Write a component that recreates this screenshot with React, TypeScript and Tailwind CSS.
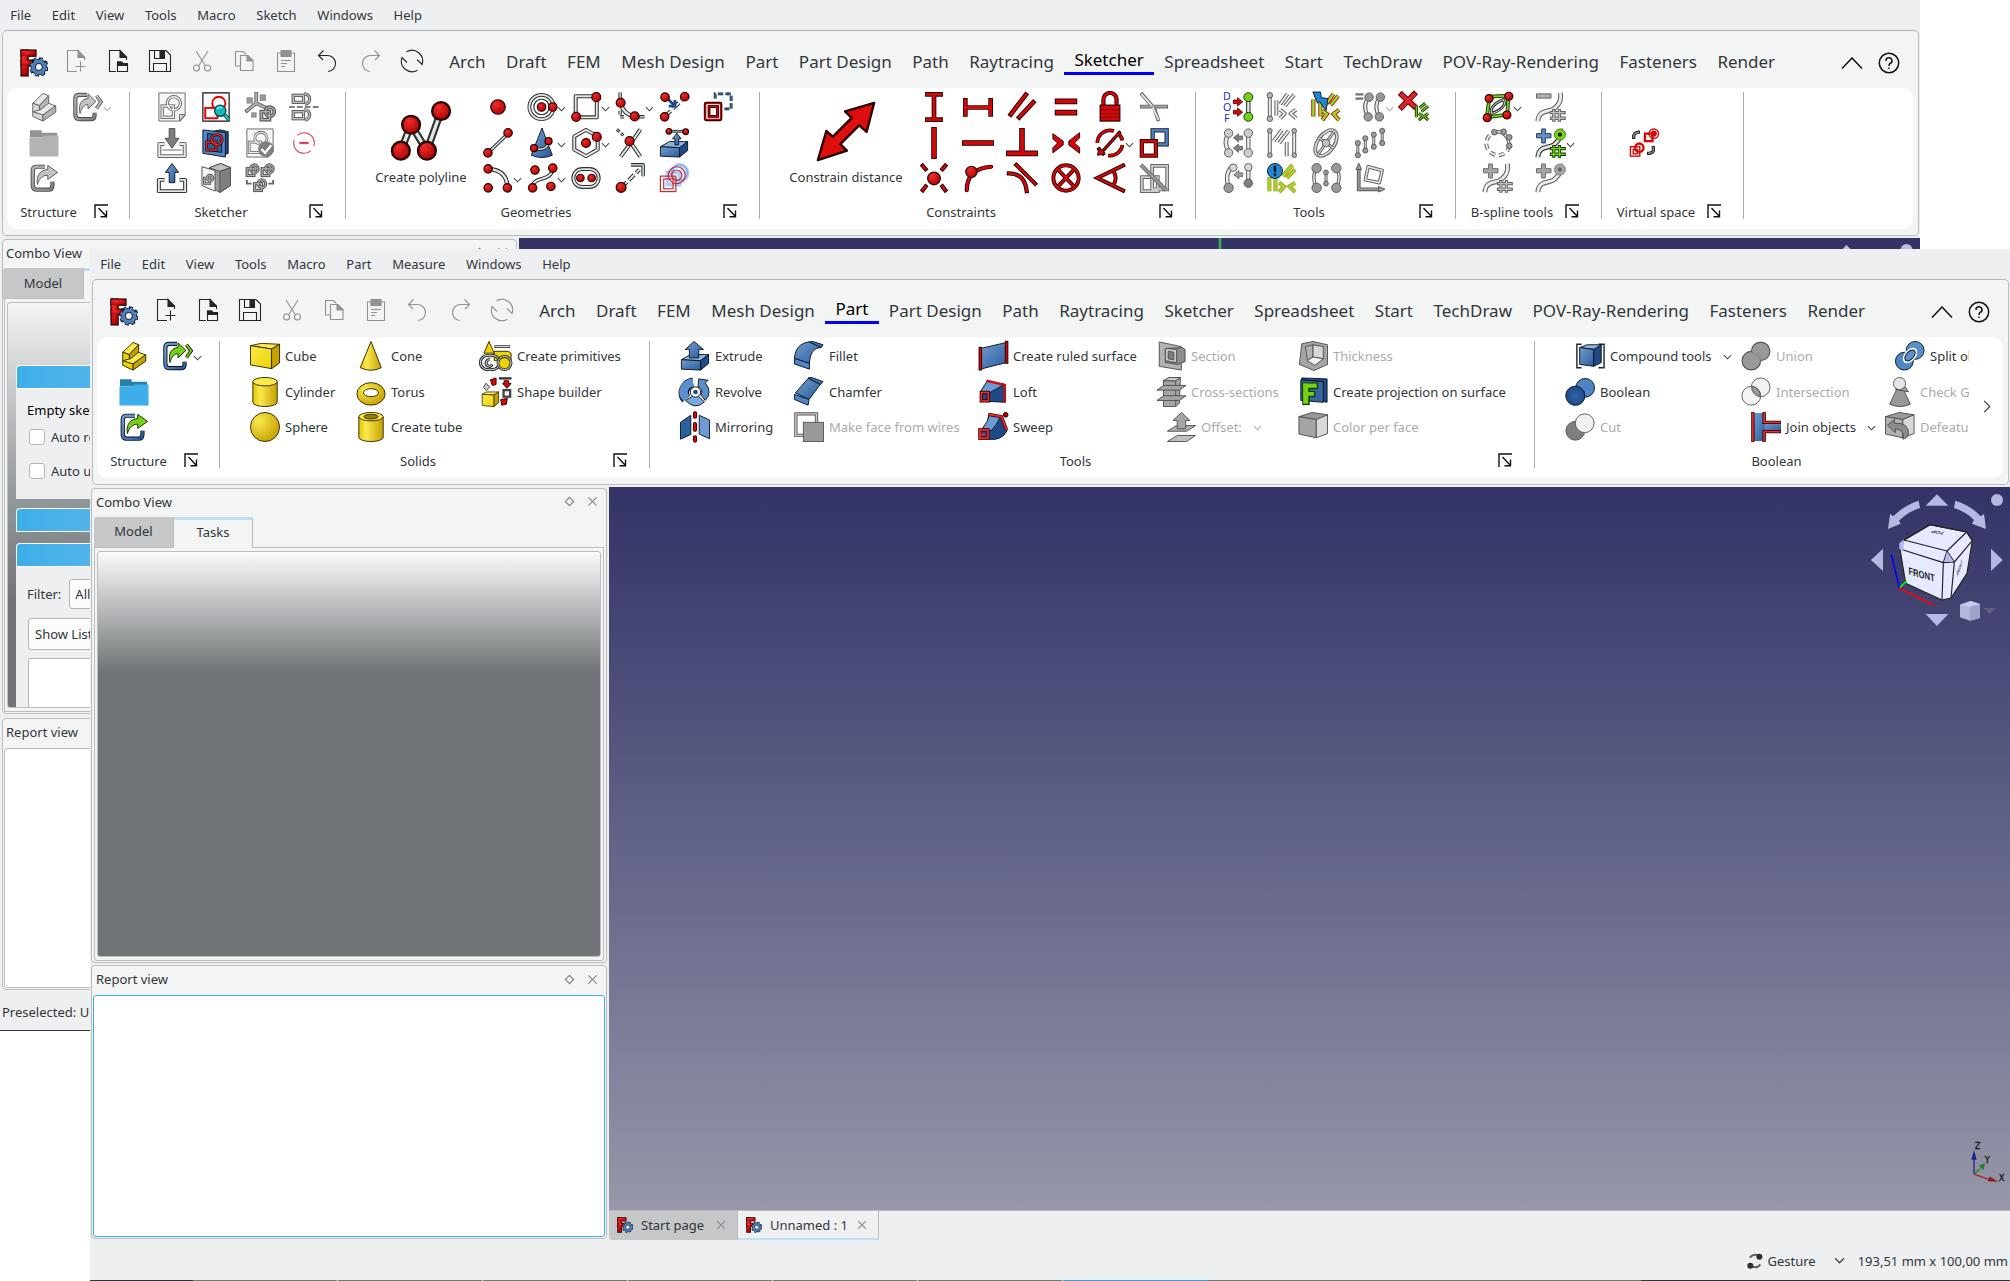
import React from "react";

type Node = React.ReactNode;

/* ---------- drawing helpers (64 x 64 canvas) ---------- */
const Dot = ({ x, y, r = 8 }: { x: number; y: number; r?: number }) => (
  <circle cx={x} cy={y} r={r} fill="url(#gR)" stroke="#280000" strokeWidth={2.5} />
);
const Tube = ({ d, w = 4, dash }: { d: string; w?: number; dash?: string }) => (
  <g fill="none" strokeLinejoin="round">
    <path d={d} stroke="#2e3436" strokeWidth={w + 4.5} strokeDasharray={dash} />
    <path d={d} stroke="#e4e7e2" strokeWidth={w} strokeDasharray={dash} />
  </g>
);
const Line = ({ d, w = 6, c = "#d40808", o = "#280000", cap = "square" }: { d: string; w?: number; c?: string; o?: string; cap?: "square" | "butt" | "round" }) => (
  <g fill="none" strokeLinecap={cap} strokeLinejoin="miter">
    <path d={d} stroke={o} strokeWidth={w + 4} />
    <path d={d} stroke={c} strokeWidth={w} />
  </g>
);
const Shape = ({ d, f = "url(#gB)", s = "#0b1521", w = 2 }: { d: string; f?: string; s?: string; w?: number }) => (
  <path d={d} fill={f} stroke={s} strokeWidth={w} strokeLinejoin="round" />
);
const Green = ({ d, w = 5, o = "#c01800" }: { d: string; w?: number; o?: string }) => <Line d={d} w={w} c="#8ae234" o={o} cap="butt" />;
const GDot = ({ x, y, r = 8, f = "#8ae234" }: { x: number; y: number; r?: number; f?: string }) => (
  <circle cx={x} cy={y} r={r} fill={f} stroke="#172a1a" strokeWidth={2} />
);

const Gear = ({ x, y, r }: { x: number; y: number; r: number }) => (
  <g fill="none">
    <circle cx={x} cy={y} r={r} stroke="#0b1521" strokeWidth={r * 0.62} strokeDasharray={`${r * 0.46} ${r * 0.3254}`} />
    <circle cx={x} cy={y} r={r * 0.75} stroke="#0b1521" strokeWidth={r * 0.72} />
    <circle cx={x} cy={y} r={r * 0.98} stroke="#5b8bc6" strokeWidth={r * 0.4} strokeDasharray={`${r * 0.28} ${r * 0.5054}`} strokeDashoffset={-r * 0.09} />
    <circle cx={x} cy={y} r={r * 0.75} stroke="#4f80bd" strokeWidth={r * 0.5} />
  </g>
);

const SketchPaper = (
  <>
    <path d="M4 2H60V50L50 62H4Z" fill="#f4f5f3" stroke="#2e3436" strokeWidth={2} />
    <path d="M60 48H48V62Z" fill="#c8cbc7" stroke="#2e3436" strokeWidth={2} />
  </>
);
const MiniSketch = ({ x, y, s = 1 }: { x: number; y: number; s?: number }) => (
  <g transform={`translate(${x} ${y}) scale(${s})`} fill="none">
    <g stroke="#1a1c1d" strokeWidth={8}><rect x="3" y="12" width="17" height="17" /><circle cx="21" cy="12" r="9.5" /></g>
    <g stroke="#999" strokeWidth={3}><rect x="3" y="12" width="17" height="17" /><circle cx="21" cy="12" r="9.5" /></g>
  </g>
);
/* flat block seen from above, as used by the extrusion family */
const Slab = () => (
  <>
    <Shape d="M3 40L22 29H61L44 42Z" f="#8fb6e0" />
    <Shape d="M3 40L44 42V62L3 60Z" />
    <Shape d="M44 42L61 29V48L44 62Z" f="#204a87" />
  </>
);
const PlusS = ({ c }: { c: string }) => <Shape d="M12 2H20V12H32V21H20V32H12V21H1V12H12Z" f={c} s="#2e3436" />;
const Curve = <Tube d="M4 62C6 34 32 46 42 32C52 24 54 14 52 2" w={6} />;
const Hash = ({ c = "#73d216" }: { c?: string }) => <Line d="M38 40V60M50 40V60M33 44H60M33 56H60" w={3} c={c} o="#173a00" />;

const ICONS: Record<string, Node> = {
  logo: (
    <>
      <g fill="#1f0000"><rect x="1" y="1" width="19" height="62" /><rect x="1" y="1" width="37" height="17" /><rect x="1" y="24" width="29" height="15" /></g>
      <g fill="url(#gR)"><rect x="3.5" y="3.5" width="14" height="57" /><rect x="3.5" y="3.5" width="32" height="12" /><rect x="3.5" y="27" width="24" height="10" /></g>
      <Gear x={43} y={41} r={17} />
      <circle cx={43} cy={41} r={8} fill="#f3f5f4" stroke="#0b1521" strokeWidth={2} />
    </>
  ),
  brick: (
    <g stroke="#302b00" strokeWidth={2} strokeLinejoin="round">
      <path d="M8 24L30 3L42 8L22 29Z" fill="#fce94f" />
      <path d="M22 29L42 8V28L24 44Z" fill="#c4a000" />
      <path d="M8 24L22 29V46L8 42Z" fill="#edd400" />
      <path d="M8 42L28 50L57 30L42 24L24 38Z" fill="#fce94f" />
      <path d="M8 42V52L30 62V49Z" fill="#edd400" />
      <path d="M30 49L57 29V43L30 62Z" fill="#c4a000" />
    </g>
  ),
  link: (
    <>
      <path d="M34 8H16Q8 8 8 16V48Q8 57 17 57H42Q50 57 50 48V40" fill="none" stroke="#0b1521" strokeWidth={9} />
      <path d="M34 8H16Q8 8 8 16V48Q8 57 17 57H42Q50 57 50 48V40" fill="none" stroke="url(#gB)" strokeWidth={5} />
      <Shape d="M18 46C14 26 26 14 40 14V5L61 20L40 35V26C30 26 22 32 18 46Z" f="#73d216" s="#172a04" />
    </>
  ),
  links: (
    <>
      <path d="M30 6H13Q5 6 5 14V48Q5 58 14 58H38Q46 58 46 50V44" fill="none" stroke="#0b1521" strokeWidth={9} />
      <path d="M30 6H13Q5 6 5 14V48Q5 58 14 58H38Q46 58 46 50V44" fill="none" stroke="url(#gB)" strokeWidth={5} />
      <Shape d="M15 46C10 26 20 14 32 14V4L49 20L32 36V27C24 27 18 34 15 46Z" f="#73d216" s="#172a04" />
      <Line d="M50 8L60 21L50 35" w={3.5} c="#73d216" o="#172a04" cap="butt" />
    </>
  ),
  folder: (
    <>
      <path d="M2 5H27V10H60V20H2Z" fill="#2980a8" />
      <path d="M1 21H26L32 16H63V61H1Z" fill="#3daee9" />
    </>
  ),
  /* sketcher */
  newSketch: (
    <>
      {SketchPaper}
      <g fill="none" stroke="#2e3436" strokeWidth={7}><rect x="11" y="30" width="24" height="24" /><circle cx="36" cy="24" r="14" /></g>
      <g fill="none" stroke="#eee" strokeWidth={3}><rect x="11" y="30" width="24" height="24" /><circle cx="36" cy="24" r="14" /></g>
    </>
  ),
  editSketch: (
    <>
      <path d="M4 2H60V62H4Z" fill="#fafafa" stroke="#111" strokeWidth={2.5} />
      <g fill="none" stroke="#ef0000" strokeWidth={4}><rect x="9" y="34" width="26" height="22" /><circle cx="38" cy="24" r="14" /></g>
      <path d="M48 46L60 59" stroke="#0b4c4c" strokeWidth={8} />
      <path d="M48 46L60 59" stroke="#16d0d2" strokeWidth={4} />
      <circle cx="41" cy="40" r="12" fill="#19b5b8" stroke="#064a4c" strokeWidth={3} />
      <path d="M34 36Q38 31 45 34" stroke="#5df0f0" strokeWidth={4} fill="none" />
    </>
  ),
  reorient: (
    <>
      <Line d="M24 4V24L4 40M24 24L46 34" w={4} c="#999" o="#333" />
      <path d="M32 6H44V18H32ZM4 12H16V24H4ZM14 44H24V54H14Z" fill="#777" stroke="#333" />
      <MiniSketch x={32} y={30} s={1} />
    </>
  ),
  validate: (
    <>
      {SketchPaper}
      <g fill="none" stroke="#2e3436" strokeWidth={6}><rect x="9" y="30" width="24" height="22" /><circle cx="34" cy="22" r="13" /></g>
      <g fill="none" stroke="#eee" strokeWidth={2.5}><rect x="9" y="30" width="24" height="22" /><circle cx="34" cy="22" r="13" /></g>
      <circle cx="45" cy="45" r="17" fill="#555" />
      <path d="M35 45L43 53L56 37" stroke="#fff" strokeWidth={5} fill="none" />
    </>
  ),
  leave: (
    <>
      <Tube d="M16 34H5V60H59V34H48" w={4} />
      <path d="M12 47H52" stroke="#2e3436" strokeWidth={2} />
      <Shape d="M26 1H38V22H47L32 43L17 22H26Z" f="#555" />
    </>
  ),
  exit: (
    <>
      <Tube d="M16 36H4V60H60V36H48" w={4} />
      <Shape d="M32 1L46 20H38V42H26V20H18Z" />
    </>
  ),
  mapView: (
    <>
      <Shape d="M20 8L42 4L58 8V54L48 58L20 50Z" f="#204a87" />
      <Shape d="M4 4L52 10V62L4 54Z" f="#4f86c6" />
      <Shape d="M14 12L44 15V52L14 48Z" f="#2d5f9f" />
      <g fill="none" stroke="#280000" strokeWidth={6}><rect x="12" y="30" width="20" height="17" /><circle cx="34" cy="25" r="11" /></g>
      <g fill="none" stroke="#ef2929" strokeWidth={3}><rect x="12" y="30" width="20" height="17" /><circle cx="34" cy="25" r="11" /></g>
    </>
  ),
  mapSketch: (
    <>
      <Shape d="M18 10L42 1L63 10V48L40 63L18 50Z" f="#777" />
      <Shape d="M18 10L40 18L63 10L42 1Z" f="#aaa" />
      <Shape d="M40 18L63 10V48L40 63Z" f="#555" />
      <Shape d="M2 8L30 16V60L2 48Z" f="#f0f0f0" />
      <MiniSketch x={5} y={24} s={0.68} />
    </>
  ),
  merge: (<><MiniSketch x={2} y={2} s={0.85} /><MiniSketch x={34} y={2} s={0.85} /><MiniSketch x={18} y={34} s={0.85} /><path d="M4 36V44H14M60 36V44H50" stroke="#333" strokeWidth={4} fill="none" /></>),
  mirrorSketch: (
    <>
      <path d="M0 32H64" stroke="#555" strokeWidth={4} strokeDasharray="12 5" />
      <g fill="none" stroke="#222" strokeWidth={7}><rect x="9" y="7" width="22" height="15" /><path d="M32 4A11 11 0 1 1 34 26" /><rect x="9" y="42" width="22" height="15" /><path d="M32 38A11 11 0 1 1 34 60" /></g>
      <g fill="none" stroke="#aaa" strokeWidth={3}><rect x="9" y="7" width="22" height="15" /><path d="M32 4A11 11 0 1 1 34 26" /><rect x="9" y="42" width="22" height="15" /><path d="M32 38A11 11 0 1 1 34 60" /></g>
    </>
  ),
  stop: (<g fill="none" stroke="#da4453"><circle cx="32" cy="32" r="22" strokeWidth={2.2} strokeDasharray="58 11" strokeDashoffset={-18} /><path d="M22 32H42" strokeWidth={5} /></g>),
  /* geometries */
  polyline: (<><Tube d="M10.5 53L21.4 25.3L38.3 53L53.4 10.7" w={3.5} /><Dot x={53.4} y={10.7} r={9.5} /><Dot x={21.4} y={25.3} r={9.5} /><Dot x={10.5} y={53} r={9.5} /><Dot x={38.3} y={53} r={9.5} /></>),
  point: <Dot x={32} y={32} r={15.5} />,
  circle: (<><g fill="none"><circle cx="31" cy="32" r="26" stroke="#2e3436" strokeWidth={8} /><circle cx="31" cy="32" r="26" stroke="#e4e7e2" strokeWidth={4} /><circle cx="31" cy="32" r="16.5" stroke="#2e3436" strokeWidth={2.5} /></g><Dot x={31} y={32} r={9} /><Dot x={55} y={32} r={9} /></>),
  rect: (<><Tube d="M10 9H55V54H10Z" w={4} /><Dot x={54} y={11} r={9.5} /><Dot x={11} y={53} r={9.5} /></>),
  fillet: (<><Tube d="M11 1V14M48 53H63" w={3} /><Tube d="M11 40V53H22" w={3} dash="8 5" /><Tube d="M12 24Q18 48 42 52" w={5} /><Dot x={12} y={23} r={9.5} /><Dot x={42} y={52} r={9.5} /></>),
  split: (<><Tube d="M12 53L56 10" w={4} dash="18 7" /><path d="M20 16L34 30M34 17V30H21" stroke="#204a87" strokeWidth={6} fill="none" /><Dot x={13} y={11} r={9} /><Dot x={12} y={53} r={9} /><Dot x={55} y={10} r={9} /></>),
  external6: (<><path d="M26 14V4H60V36H46" fill="none" stroke="#0b1521" strokeWidth={6} strokeDasharray="11 5" /><path d="M26 14V4H60V36H46" fill="none" stroke="#3f78b8" strokeWidth={3} strokeDasharray="11 5" /><rect x="3" y="22" width="37" height="39" rx="4" fill="#cc0000" stroke="#280000" strokeWidth={2.5} /><rect x="7" y="26" width="29" height="31" fill="#f2f2f2" /><rect x="13" y="31" width="18" height="21" fill="#fff" stroke="#280000" strokeWidth={6} /><rect x="13" y="31" width="18" height="21" fill="none" stroke="#cc0000" strokeWidth={2.5} /></>),
  line: (<><Tube d="M11 53L54 11" w={3} /><Dot x={10.5} y={53} r={9} /><Dot x={53.5} y={10.5} r={9} /></>),
  conic: (<><Shape d="M32 0L54 58Q32 68 9 58Z" /><Tube d="M16 44Q44 50 46 28" w={3} /><Dot x={46} y={28} r={7.5} /><Dot x={15} y={43} r={7.5} /></>),
  polygon: (<><Tube d="M32 4L57 18V46L32 60L7 46V18Z" w={4} /><Dot x={32} y={32} r={9.5} /><Dot x={55} y={19} r={9.5} /></>),
  trim: (<><Tube d="M54 3Q40 24 12 61M26 20L54 61" w={4} /><Tube d="M4 3L18 16" w={2} dash="8 4" /><Dot x={31} y={28} r={9.5} /></>),
  extern: (<><Slab /><Tube d="M20 7H58" w={1.5} /><Shape d="M38 11L47 23H42V36H34V23H29Z" /><Dot x={21} y={7} r={6} /><Dot x={57} y={8} r={6} /></>),
  arc: (<><Tube d="M14 13Q50 16 52 50" w={5} /><Dot x={11} y={12.5} r={9} /><Dot x={11} y={53} r={9} /><Dot x={52} y={53} r={9} /></>),
  bspline: (<><Tube d="M12 53C14 24 48 44 56 12" w={4} /><Dot x={17} y={15} r={9} /><Dot x={55} y={11} r={9} /><Dot x={12} y={53} r={9} /><Dot x={51} y={50} r={9} /></>),
  slot: (<><Tube d="M24 13H40A19 19 0 0 1 40 51H24A19 19 0 0 1 24 13Z" w={4} /><Dot x={20} y={32} r={8} /><Dot x={44} y={32} r={8} /></>),
  extend: (<><Tube d="M14 52L52 14" w={4} dash="16 6" /><Tube d="M34 4H60V28" w={3} /><Dot x={13} y={52} r={10.5} /></>),
  carbon: (<><g fill="none" stroke="#a9ccff" strokeWidth={8}><rect x="18" y="20" width="26" height="26" /><circle cx="44" cy="21" r="17" /></g><g fill="none" stroke="#6f8fe0" strokeWidth={1.5}><circle cx="44" cy="21" r="17" /></g><g fill="none" stroke="#c9262a" strokeWidth={2.5}><rect x="3" y="28" width="33" height="33" /><rect x="10" y="34" width="20" height="21" /><circle cx="38" cy="26" r="18" /><circle cx="38" cy="26" r="11" /></g></>),
  /* constraints */
  distance: <Shape d="M62 2L54 33L46 26L26 46L33 53L2 63L11 32L18 38L38 18L31 11Z" f="url(#gRed)" s="#280000" w={2.5} />,
  cV: <Line d="M18 5H46M32 5V59M18 59H46" />,
  cH: <Line d="M5 18V48M5 33H59M59 18V48" />,
  cPar: <Line d="M8 48L40 6M26 54L56 22" />,
  cEq: <Line d="M14 20H50M14 44H50" w={8} />,
  lock: (<><Line d="M18 28V16A14 14 0 0 1 46 16V28" w={5} cap="butt" /><rect x="11" y="28" width="42" height="34" fill="#d40808" stroke="#280000" strokeWidth={2.5} /><path d="M13 38H51M13 46H51M13 54H51" stroke="#7c0000" strokeWidth={2} /></>),
  toggleC: (<g fill="none"><path d="M4 2L28 30M32 34L42 62M2 31H62" stroke="#2e3436" strokeWidth={8} /><path d="M5 4L28 30L42 60" stroke="#ddd" strokeWidth={4} /><path d="M4 31H60" stroke="#888" strokeWidth={4} /></g>),
  cVl: <Line d="M32 4V60" w={8} />,
  cHl: <Line d="M4 32H60" w={8} />,
  cPerp: <Line d="M32 6V52M4 54H60" w={8} />,
  cSym: (<><Shape d="M4 12L26 28V36L4 53V42L14 32L4 23Z" f="#d40808" s="#280000" /><Shape d="M61 10L38 28V36L61 54V42L50 32L61 21Z" f="#d40808" s="#280000" /></>),
  cDia: (<><path d="M32 5A27 27 0 1 0 32 59A27 27 0 1 0 32 5" fill="none" stroke="#280000" strokeWidth={8} strokeDasharray="42 10 20 8" /><path d="M32 5A27 27 0 1 0 32 59A27 27 0 1 0 32 5" fill="none" stroke="#d40808" strokeWidth={4.5} strokeDasharray="42 10 20 8" /><Line d="M14 52L52 10" w={3} /><Shape d="M5 58L9 42L22 56Z" f="#d40808" s="#280000" /></>),
  swap: (<><rect x="29" y="5" width="30" height="30" fill="#fff" stroke="#0b1521" strokeWidth={9} /><rect x="29" y="5" width="30" height="30" fill="none" stroke="#4f86c6" strokeWidth={5} /><rect x="6" y="28" width="30" height="31" fill="#fff" stroke="#280000" strokeWidth={9} /><rect x="6" y="28" width="30" height="31" fill="none" stroke="#d40808" strokeWidth={5} /></>),
  cFix: (<><Line d="M8 6L14 13M56 6L50 13M8 58L14 50M56 58L50 50" w={5} /><Dot x={32} y={33} r={13.5} /></>),
  cTan: (<><Line d="M8 58Q8 12 60 8" w={5} cap="round" /><Dot x={18} y={19} r={12} /></>),
  cTangent: (<><Line d="M20 4L60 44" w={5} /><Line d="M4 22Q38 22 42 60" w={5} /></>),
  cBlock: (<><Line d="M32 5A27 27 0 1 0 32 59A27 27 0 1 0 32 5M14 13L50 51M50 13L14 51" w={4.5} cap="butt" /></>),
  cAngle: <Line d="M60 5L5 32L60 59M40 18Q48 32 40 46" w={4.5} />,
  toggleAct: (<g fill="none"><path d="M6 30H40V60H6ZM28 6H60V56H28Z" stroke="#2e3436" strokeWidth={8} /><path d="M6 30H40V60H6ZM28 6H60V56H28Z" stroke="#bbb" strokeWidth={4} /><path d="M4 4L58 58" stroke="#2e3436" strokeWidth={9} /><path d="M4 4L58 58" stroke="#777" strokeWidth={5} /></g>),
  /* tools */
  dof: (
    <>
      <g fontFamily="Noto Sans, sans-serif" fontSize="23" fill="#1a2fbf"><text x="0" y="18">D</text><text x="0" y="40.500">O</text><text x="2" y="63">F</text></g>
      <Tube d="M54 12V52" w={5} /><GDot x={54} y={11} r={9.5} f="#73d216" /><GDot x={54} y={53} r={9.5} f="#73d216" />
      <Shape d="M22 17H31V12L42 21L31 30V25H22ZM22 39H31V34L42 43L31 52V47H22Z" f="#d40808" s="#280000" w={1.5} />
    </>
  ),
  t2: (<><Tube d="M6 6V58M20 18V50" w={4} /><GDot x={6} y={7} r={6} f="#999" /><GDot x={6} y={57} r={6} f="#999" /><Tube d="M28 26L44 4M38 30L58 6" w={4} /><Tube d="M28 38L38 46L28 56M62 38L50 46L62 56" w={4} /></>),
  t3: (<><Green d="M5 16V52M20 22V52M32 26L48 4M42 28L58 8M24 40L34 47L24 60M60 38L48 47L60 60" /><Shape d="M4 0H20L22 12L36 14L32 40L18 20L14 24Z" f="#1e88d2" s="#0b1521" /></>),
  t4: (<><path d="M1 5H18M1 14H18" stroke="#444" strokeWidth={5} /><Tube d="M30 10Q14 30 28 52M54 10Q38 30 52 52" w={4} /><GDot x={30} y={11} r={9} f="#777" /><GDot x={54} y={11} r={9} f="#777" /><GDot x={28} y={53} r={9} f="#777" /><GDot x={52} y={53} r={9} f="#777" /></>),
  t5: (<><Line d="M6 6L32 30M32 5L6 32" w={8} c="#d8262a" o="#5a0000" /><Line d="M37 30V54M44 34L56 24M48 42L62 30M42 46L52 52L42 60M62 46L54 52L62 60" w={2.5} c="#73d216" o="#173a00" cap="butt" /></>),
  t6: (<><Tube d="M14 10Q-2 30 14 52M54 12V52" w={5} /><GDot x={12} y={11} r={9} f="#bbb" /><GDot x={54} y={11} r={9} f="#bbb" /><GDot x={12} y={53} r={9} f="#bbb" /><GDot x={54} y={53} r={9} f="#bbb" /><Shape d="M42 17H33V12L22 21L33 30V25H42ZM42 39H33V34L22 43L33 52V47H42Z" f="#555" s="#222" w={1.5} /></>),
  t7: (<><Tube d="M6 6V58M58 6V58M42 30V60M14 28L32 4M26 32L46 6" w={4} /><GDot x={6} y={6} r={5} f="#999" /><GDot x={6} y={58} r={5} f="#999" /><GDot x={58} y={6} r={5} f="#999" /><GDot x={58} y={58} r={5} f="#999" /></>),
  t8: (<g transform="rotate(35 32 32)"><ellipse cx="32" cy="32" rx="18" ry="31" fill="none" stroke="#2e3436" strokeWidth={8} /><ellipse cx="32" cy="32" rx="18" ry="31" fill="none" stroke="#ccc" strokeWidth={3.5} /><Tube d="M32 2V62M14 32H50" w={2} /><GDot x={32} y={32} r={8} f="#aaa" /></g>),
  t9: (<><Tube d="M6 30V56M22 22V48M40 14V42M58 6V34" w={2} /><g>{[[6, 32], [6, 58], [22, 22], [22, 48], [40, 14], [40, 40], [58, 6], [58, 32]].map(([x, y]) => <GDot key={`${x}-${y}`} x={x} y={y} r={5.5} f="#777" />)}</g></>),
  t10: (<><Tube d="M22 6Q2 20 12 52M54 12V46" w={5} /><GDot x={22} y={10} r={8} f="#ccc" /><GDot x={54} y={9} r={8} f="#ccc" /><GDot x={12} y={53} r={10} f="#777" /><GDot x={54} y={43} r={9} f="#555" /><Shape d="M42 21H34V16L23 25L34 34V29H42Z" f="#777" s="#222" w={1.5} /></>),
  t11: (<><Green o="#d88a1a" d="M5 30V60M18 34V60M34 28L54 4M42 32L60 14M26 42L36 50L26 62M60 42L48 50L60 62" /><circle cx="17" cy="17" r="16" fill="#1e88d2" stroke="#0b1521" strokeWidth={2} /><path d="M17 6V19M17 22V27" stroke="#111" strokeWidth={5} /></>),
  t12: (<><Tube d="M12 10Q0 30 12 54M54 10Q66 30 54 54" w={3} /><Tube d="M32 22V46" w={2} /><GDot x={12} y={11} r={10} f="#777" /><GDot x={54} y={11} r={10} f="#777" /><GDot x={12} y={53} r={10} f="#777" /><GDot x={54} y={53} r={10} f="#777" /><GDot x={32} y={20} r={5} f="#777" /><GDot x={32} y={44} r={5} f="#777" /></>),
  t13: (<><Line d="M8 12V56H52" w={4} c="#777" o="#222" /><Shape d="M8 0L14 14H2ZM64 56L50 62V50Z" f="#777" s="#222" /><Tube d="M28 8L58 16L52 42L22 36Z" w={3} /></>),
  b1: (<><path d="M14 10L54 8L52 48L8 54Z" fill="#fff" stroke="#173a00" strokeWidth={8} /><path d="M14 10L54 8L52 48L8 54Z" fill="none" stroke="#73d216" strokeWidth={4} /><Tube d="M18 46C14 30 30 22 44 16L46 26C40 38 30 42 18 46Z" w={2} /><Dot x={13} y={14} r={8.5} /><Dot x={55} y={9} r={8.5} /><Dot x={51} y={49} r={8.5} /><Dot x={9} y={55} r={8.5} /></>),
  b2: (<><Tube d="M32 8A25 25 0 1 0 57 34" w={4} dash="12 8" /><Tube d="M28 8Q52 6 57 40" w={3} /><GDot x={24} y={9} r={6} f="#777" /><GDot x={44} y={8} r={6} f="#777" /><GDot x={56} y={20} r={6} f="#777" /><GDot x={56} y={38} r={6} f="#777" /></>),
  b3: (<>{Curve}<PlusS c="#888" /><Hash c="#aaa" /></>),
  b4: (<>{Curve}<Shape d="M1 4H32V13H1Z" f="#999" s="#222" /><Hash c="#aaa" /></>),
  b5: (<>{Curve}<PlusS c="#5b8fce" /><Hash /><circle cx="51" cy="14" r="12" fill="#73d216" stroke="#2e6b00" strokeWidth={1.5} /><circle cx="51" cy="14" r="4.500" fill="#222" /></>),
  b6: (<>{Curve}<PlusS c="#888" /><circle cx="51" cy="14" r="12" fill="#888" stroke="#444" strokeWidth={1.5} /><circle cx="51" cy="14" r="4.500" fill="#333" /></>),
  virt: (<><g fill="none" stroke="#d40808" strokeWidth={3}><rect x="34" y="12" width="16" height="16" strokeWidth={5} /><circle cx="53" cy="12" r="10" /><circle cx="53" cy="12" r="5" fill="#d40808" /><rect x="3" y="40" width="20" height="20" /><rect x="9" y="46" width="9" height="9" /><circle cx="22" cy="42" r="9" strokeWidth={5} /></g><Line d="M10 20Q10 10 20 9M52 42Q54 54 42 54" w={3} c="#888" o="#222" /></>),
  /* solids */
  cube: (<g stroke="#302b00" strokeWidth={2} strokeLinejoin="round"><path d="M1 10L24 5L63 7L46 17Z" fill="#fce94f" /><path d="M1 10L46 17V59L1 51Z" fill="url(#gY)" /><path d="M46 17L63 7V47L46 59Z" fill="#c4a000" /></g>),
  cylinder: (<g stroke="#302b00" strokeWidth={2}><path d="M6 10V54A26 9 0 0 0 58 54V10" fill="url(#gYh)" /><ellipse cx="32" cy="10" rx="26" ry="9" fill="#fce94f" /></g>),
  sphere: <circle cx="32" cy="32" r="31" fill="url(#gYs)" stroke="#302b00" strokeWidth={2} />,
  cone: <path d="M32 1L54 57Q32 68 9 57Z" fill="url(#gYh)" stroke="#302b00" strokeWidth={2} strokeLinejoin="round" />,
  torus: (<g stroke="#302b00" strokeWidth={2}><path d="M32 12A30 24 0 1 0 32 60A30 24 0 1 0 32 12M32 25A15 8 0 1 1 32 42A15 8 0 1 1 32 25" fill="url(#gYs)" fillRule="evenodd" /></g>),
  tube: (<g stroke="#302b00" strokeWidth={2}><path d="M6 10V54A26 9 0 0 0 58 54V10" fill="url(#gYh)" /><ellipse cx="32" cy="10" rx="26" ry="9" fill="#fce94f" /><ellipse cx="32" cy="10" rx="15" ry="5" fill="#a08000" /></g>),
  primitives: (<><Shape d="M15 1L26 26H4Z" f="#edd400" s="#302b00" /><path d="M26 12H60" stroke="#2e3436" strokeWidth={6} /><path d="M27 12H59" stroke="#fff" strokeWidth={2} /><Shape d="M26 22H56L62 26V42H26Z" f="#edd400" s="#302b00" /><Tube d="M17 32A15 15 0 1 0 17 60A15 15 0 1 0 17 32M17 40A7 7 0 1 0 22 50" w={2} /><circle cx="48" cy="47" r="14" fill="#edd400" stroke="#2e3436" strokeWidth={6} /><circle cx="48" cy="47" r="14" fill="none" stroke="#ddd" strokeWidth={2} /></>),
  builder: (<><g transform="translate(0 29) scale(.56)" stroke="#302b00" strokeWidth={3}><path d="M1 14L16 5H63L46 17Z" fill="#fce94f" /><path d="M1 14L46 17V61L1 57Z" fill="url(#gY)" /><path d="M46 17L63 5V46L46 61Z" fill="#c4a000" /></g><path d="M36 3H63" stroke="#2e3436" strokeWidth={5} /><path d="M9 13L16 22L9 29L3 22Z" fill="#ccc" stroke="#444" strokeWidth={2} /><Shape d="M18 6L30 2L30 16L22 18Z" f="#d40808" s="#280000" /><Shape d="M47 8H57V14H62L53 24L44 14H47Z" f="#d40808" s="#280000" /><rect x="46" y="28" width="14" height="14" fill="#fff" stroke="#444" strokeWidth={5} /><Shape d="M40 48L54 46L52 58L42 60Z" f="#d40808" s="#280000" /></>),
  /* part tools */
  extrude: (<><Slab /><Shape d="M30 1L50 18H40V36H20V18H11Z" /></>),
  revolve: (<><g fill="none" strokeWidth={22} stroke="#0b1521"><path d="M13 47A24 22 0 0 1 28 12" /></g><g fill="none" strokeWidth={18} stroke="#5b8fce"><path d="M14 46A22 20 0 0 1 28 12" /></g><Shape d="M12 50L28 40H38L52 53Q32 72 12 50Z" f="#7aa7dc" /><Shape d="M40 4L60 7L54 13Q70 32 54 50L44 38Q50 28 42 22L38 26Z" f="#5b8fce" /><circle cx="33" cy="32" r="11" fill="#fff" stroke="#0b1521" strokeWidth={2} /><circle cx="33" cy="32" r="5" fill="#204a87" /></>),
  mirroring: (<><Shape d="M1 22L23 7V48L1 58Z" f="#2d5f9f" /><Shape d="M41 7L63 17V57L41 47Z" f="#6b9bd2" /><path d="M32 3V10M32 26V38M32 54V61" stroke="#280000" strokeWidth={9} strokeLinecap="round" /><path d="M32 3V10M32 26V38M32 54V61" stroke="#d40808" strokeWidth={5} strokeLinecap="round" /></>),
  pfillet: (<><Shape d="M32 2L40 1L62 8L58 14L50 12Z" f="#3d72b3" /><Shape d="M1 37C2 16 14 4 32 2L58 14C42 14 34 26 33 48Z" /><Shape d="M1 37L33 48L33 60L1 49Z" f="#4f86c6" /></>),
  chamfer: (<><Shape d="M30 2L38 1L62 10L56 16Z" f="#3d72b3" /><Shape d="M3 34L30 3L56 16L32 48Z" /><Shape d="M1 37L32 48L30 60L1 48Z" f="#4f86c6" /></>),
  face: (<><path d="M4 4H48V50H4Z" fill="#fff" stroke="#222" strokeWidth={7} /><path d="M4 4H48V50H4Z" fill="none" stroke="#bbb" strokeWidth={3} /><rect x="20" y="22" width="43" height="41" fill="#777" stroke="#222" strokeWidth={2} /></>),
  ruled: (<><Shape d="M5 16L61 3V46L5 60Z" /><Line d="M5 16V59M61 3V45" w={3.5} /></>),
  loft: (<><Shape d="M6 32L20 10L58 16V54L24 52L6 48Z" f="#204a87" /><Shape d="M6 30L20 8L56 16L24 34Z" f="#6b9bd2" /><path d="M18 8L57 17V54" fill="none" stroke="#d40808" strokeWidth={5} /><rect x="7" y="33" width="15" height="18" fill="#204a87" stroke="#280000" strokeWidth={7} /><rect x="7" y="33" width="15" height="18" fill="none" stroke="#ef2929" strokeWidth={3.5} /></>),
  sweep: (<><Shape d="M12 38Q24 24 22 8L50 8L62 40Q50 62 24 58Z" f="#204a87" /><Shape d="M10 34Q22 20 24 6L48 10Q40 28 28 40Z" f="#6b9bd2" /><path d="M22 5L50 10L61 38" fill="none" stroke="#280000" strokeWidth={7} /><path d="M22 5L50 10L61 38" fill="none" stroke="#ef2929" strokeWidth={4} /><circle cx="59" cy="6" r="5" fill="#a00" stroke="#280000" strokeWidth={2} /><rect x="4" y="38" width="17" height="18" fill="#204a87" stroke="#280000" strokeWidth={7} /><rect x="4" y="38" width="17" height="18" fill="none" stroke="#ef2929" strokeWidth={4} /><path d="M3 48H16" stroke="#ef2929" strokeWidth={4} /></>),
  section: (<><Shape d="M7 2L54 12V62L7 54Z" f="#999" /><Shape d="M20 16L56 14L62 18V44L46 50L20 46Z" f="#666" /><Shape d="M20 16L44 18V46L20 42Z" f="#bbb" /><Shape d="M26 22L38 24V40L26 38Z" f="#555" /></>),
  cross: (<><Shape d="M16 8L28 1H52L50 56L42 63H16Z" f="#888" /><Shape d="M16 8H42L52 1M42 8V62" f="none" /><Shape d="M2 28L16 18H64L50 28ZM2 50L16 40H64L50 50Z" f="#888" /><Shape d="M16 8L28 1H52L42 8Z" f="#bbb" /></>),
  offset: (<><Shape d="M3 41L22 29H63L44 41Z" f="#999" /><Shape d="M3 63L24 50H63L44 63Z" f="#aaa" /><Shape d="M33 1L51 18H42V36H24V18H15Z" f="#888" /></>),
  thickness: (<><Shape d="M8 6L32 1L63 8V50L34 63L3 50Z" f="#888" /><Shape d="M16 12L32 8V34L20 42Z" f="#999" /><Shape d="M32 8L54 12V38L32 34Z" f="#ccc" /><Shape d="M20 42L32 34L54 38L36 52Z" f="#eee" /></>),
  projection: (<><Shape d="M8 2L62 4V54L54 52V10L8 6Z" f="#204a87" /><Shape d="M6 6L54 10V54L6 50Z" f="#3465a4" /><g fill="#173a00"><rect x="9" y="12" width="34" height="14" /><rect x="9" y="12" width="16" height="48" /><rect x="9" y="30" width="28" height="13" /></g><g fill="#73d216"><rect x="11" y="14" width="29" height="9" /><rect x="11" y="14" width="11" height="43" /><rect x="11" y="32" width="23" height="8" /></g></>),
  colorface: (<><Shape d="M2 10L30 1L63 6L39 16Z" f="#777" /><Shape d="M2 10L39 16V55L2 47Z" f="#888" /><Shape d="M39 16L63 6V46L39 55Z" f="#ccc" /></>),
  compound: (<><path d="M14 7H4V57H14M50 7H62V57H50" fill="none" stroke="#222" strokeWidth={3} /><Shape d="M10 14L26 8H56L44 18Z" f="#8fb6e0" /><Shape d="M10 14L40 18V54L10 50Z" /><Shape d="M40 18L56 8V46L40 54Z" f="#204a87" /></>),
  boolean: (<><circle cx="43" cy="23" r="20" fill="#4f83c4" stroke="#0b1521" strokeWidth={2} /><circle cx="22" cy="40" r="20.500" fill="url(#gBs)" stroke="#0b1521" strokeWidth={2} /></>),
  cut: (<><circle cx="22" cy="40" r="20" fill="#555" stroke="#222" strokeWidth={2} /><circle cx="42" cy="24" r="20" fill="#eee" stroke="#222" strokeWidth={2} /></>),
  union: (<><g stroke="#222" strokeWidth={4}><circle cx="22" cy="42" r="19" /><circle cx="42" cy="22" r="19" /></g><g fill="#777"><circle cx="22" cy="42" r="18.5" /><circle cx="42" cy="22" r="18.5" /></g><path d="M22 24Q40 28 42 42" stroke="#555" strokeWidth={2} fill="none" /></>),
  intersection: (<><circle cx="42" cy="22" r="20" fill="#eee" stroke="#222" strokeWidth={2} /><circle cx="22" cy="40" r="20" fill="#eee" fillOpacity=".8" stroke="#222" strokeWidth={2} /><path d="M23 20A20 20 0 0 1 41 42A20 20 0 0 1 23 20" fill="#777" stroke="#222" strokeWidth={2} /></>),
  join: (<><rect x="5" y="2" width="26" height="60" fill="url(#gB)" /><rect x="30" y="24" width="34" height="16" fill="url(#gB)" /><path d="M4 0V64M28 0V22H64M28 64V42H64" stroke="#280000" strokeWidth={7} fill="none" /><path d="M4 1V63M28 1V22H63M28 63V42H63" stroke="#ef2929" strokeWidth={3.5} fill="none" /></>),
  splitObj: (<><circle cx="43" cy="20" r="19" fill="#5b8fce" stroke="#0b1521" strokeWidth={2} /><circle cx="20" cy="43" r="19" fill="#4f86c6" stroke="#0b1521" strokeWidth={2} /><ellipse cx="32" cy="31" rx="16" ry="9" transform="rotate(-48 32 31)" fill="#5b8fce" stroke="#fff" strokeWidth={6} /><ellipse cx="32" cy="31" rx="14" ry="8" transform="rotate(-48 32 31)" fill="#5b8fce" stroke="#0b1521" strokeWidth={2} /></>),
  check: (<><Shape d="M24 28H40L54 58Q32 68 10 58Z" f="#777" /><Shape d="M22 26L44 22L50 32L42 30Z" f="#888" /><circle cx="31" cy="14" r="13" fill="#ddd" stroke="#222" strokeWidth={2} /></>),
  defeat: (<><Shape d="M1 10L30 1L62 6L38 16Z" f="#777" /><Shape d="M1 10L38 16V55L1 47Z" f="#999" /><Shape d="M38 16L62 6V46L38 55Z" f="#ccc" /><Shape d="M5 28L20 16V24Q52 22 50 48Q48 56 38 58Q44 38 22 36V44Z" f="#666" /></>),
};

/* ---------- quick access icons (24 x 24 canvas) ---------- */
const QUICK: Record<string, Node> = {
  new: (<><path d="M15 1.500H3.500V22.500H13M20.500 11V7.500" /><path d="M14 1.500L20.500 8V8.500H14Z" fill="currentColor" /><path d="M16.500 12.500V22.500M11.500 17.500H21.500" /></>),
  open: (<><path d="M15 1.500H3.500V22.500H10M20.500 11V7.500" /><path d="M14 1.500L20.500 8V8.500H14Z" fill="currentColor" /><path d="M11.500 22.500V13H15.500L17 14.500H21.500V22.500ZM11.500 16.500H21.500" /><path d="M11.500 13H15.500L17 15H21V16H11.500Z" fill="currentColor" /></>),
  save: (<><path d="M1.500 1.500H18L22.500 6V22.500H1.500Z" /><path d="M6.500 1.500V9.500H16.500V1.500" /><path d="M12 2H16V9H12Z" fill="currentColor" /><path d="M5.500 22V14.500H18.500V22" /></>),
  cut: (<><path d="M6 2L15.500 17M18 2L8.500 17" /><circle cx="6.500" cy="19" r="3" /><circle cx="17.500" cy="19" r="3" /></>),
  copy: (<><path d="M8 17H3.500V2.500H11L14 5" /><path d="M8.500 6.500H16L21 11.500V21.500H8.500Z" /><path d="M15 6.500V12H21Z" fill="currentColor" /></>),
  paste: (<><path d="M3.500 4H20.500V22.500H3.500Z" /><path d="M7 1.500H17V7.500H7Z" fill="currentColor" /><path d="M7 11.500H17M7 14.500H13M7 17.500H11" /></>),
  undo: <path d="M7.500 1.500L2.500 6.500L7 11M2.500 6.500H11A8 8 0 0 1 12 22.500" />,
  redo: <path d="M16.500 1.500L21.500 6.500L17 11M21.500 6.500H13A8 8 0 0 0 12 22.500" />,
  refresh: <path d="M6.500 2.800A10.700 10.700 0 0 1 22 15.500L17 10.500M17.500 21.200A10.700 10.700 0 0 1 2 8.500L7 13.500" />,
};

const Icon = ({ n, off, big }: { n: string; off?: boolean; big?: boolean }) => (
  <svg viewBox="0 0 64 64" className={`shrink-0 overflow-visible ${big ? "size-[60px]" : "size-[30px]"} ${off ? "opacity-75 grayscale" : ""}`}>
    {ICONS[n]}
  </svg>
);
const Quick = ({ n, off }: { n: string; off?: boolean }) => (
  <span className={`flex w-[42px] justify-center ${off ? "text-[#8f9192]" : "text-[#232629]"}`}>
    <svg viewBox="0 0 24 24" className="size-[24px]" fill="none" stroke="currentColor" strokeWidth="1.1">{QUICK[n]}</svg>
  </span>
);
const Chevron = ({ off, className = "" }: { off?: boolean; className?: string }) => (
  <svg viewBox="0 0 10 6" className={`h-[6px] w-[9px] shrink-0 ${className}`} fill="none" stroke={off ? "#a9abac" : "#41464a"} strokeWidth="1.2">
    <path d="M1 1L5 5L9 1" />
  </svg>
);
const Launcher = () => (
  <svg viewBox="0 0 14 14" className="size-[14px]" fill="none" stroke="#111" strokeWidth="1.4">
    <path d="M1 14V1H14M4.500 4L12 12M12.500 6.500V12.700H6.500" />
  </svg>
);

/* ---------- ribbon ---------- */
const Group = ({ w, label, children, launcher = true, pad = "pl-5", labelClass = "" }: { w: string; label: string; children: Node; launcher?: boolean; pad?: string; labelClass?: string }) => (
  <section className={`flex h-[127px] shrink-0 flex-col ${w} ${launcher ? "border-r-[1.5px] border-[#a9abac]" : "overflow-x-clip"}`}>
    <div className={`flex h-[111px] shrink-0 ${pad}`}>{children}</div>
    <div className={`flex h-[18px] shrink-0 items-center ${labelClass}`}>
      <span className="flex-1 pl-[3px] text-center leading-[18px]">{label}</span>
      {launcher && <span className="-mt-[3px] h-[14px] w-[36px]"><Launcher /></span>}
    </div>
  </section>
);

type Cell = { n: string; off?: boolean; menu?: boolean; label?: string; shift?: boolean } | null;
const Column = ({ w = "w-[44px]", cells }: { w?: string; cells: Cell[] }) => (
  <div className={`grid h-[101px] shrink-0 grid-rows-[36px_35px_30px] items-start ${w}`}>
    {cells.map((c, i) =>
      !c ? <span key={i} /> : (
        <div key={i} className={`flex h-[30px] items-center ${c.label ? (c.shift ? "pl-[10px]" : "") : "pl-[7px]"}`}>
          <Icon n={c.n} off={c.off} />
          {c.label && <span className={`ml-[5px] whitespace-nowrap ${c.off ? "text-[#a9abad]" : ""}`}>{c.label}</span>}
          {c.menu && <Chevron off={c.off} className={c.label ? "ml-[11px] mt-0.5" : "mt-[3px] -mr-2"} />}
        </div>
      )
    )}
  </div>
);

const TABS = ["Arch", "Draft", "FEM", "Mesh Design", "Part", "Part Design", "Path", "Raytracing", "Sketcher", "Spreadsheet", "Start", "TechDraw", "POV-Ray-Rendering", "Fasteners", "Render"];

const MenuBar = ({ items }: { items: string[] }) => (
  <nav className="flex h-[30px] items-center bg-[#eeeff1]">
    {items.map((m) => <span key={m} className="px-[10.35px]">{m}</span>)}
  </nav>
);

const Ribbon = ({ active, enabled, children }: { active: string; enabled: string[]; children: Node }) => (
  <div className="mx-[2px] mr-[1px] h-[206px] rounded-[5px] border-[1.5px] border-[#b9bdbd] border-t-[#b0b4b4] bg-[#f3f5f4]">
    <div className="flex h-[57px] items-center pt-[6px]">
      <div className="flex pl-[10px]">
        <span className="flex w-[42px] justify-center"><svg viewBox="0 0 64 64" className="size-[28px]">{ICONS.logo}</svg></span>
        {Object.keys(QUICK).map((q) => <Quick key={q} n={q} off={!enabled.includes(q)} />)}
      </div>
      <div className="ml-[6px] flex text-[17px] leading-[24px]">
        {TABS.map((t) =>
          t === active ? (
            <span key={t} className="mt-[-2px] h-[27px] border-b-[3px] border-[#0000ff] px-[10.25px] text-black">{t}</span>
          ) : (
            <span key={t} className="px-[10.25px]">{t}</span>
          )
        )}
      </div>
      <div className="ml-auto flex items-center gap-[15px] pr-[18px]">
        <svg viewBox="0 0 22 12" className="h-[12px] w-[22px]" fill="none" stroke="#111" strokeWidth="1.5"><path d="M1 11.500L11 1L21 11.500" /></svg>
        <svg viewBox="0 0 22 22" className="size-[22px]" fill="none" stroke="#111" strokeWidth="1.5"><circle cx="11" cy="11" r="9.700" /><path d="M8 9A3 3 0 1 1 12 11.500Q11 12 11 14M11 15.500V17" /></svg>
      </div>
    </div>
    <div className="mx-[4px] mr-[5px] flex h-[141px] rounded-[11px] bg-white pt-1">{children}</div>
  </div>
);

const DockTitle = ({ children, className = "" }: { children: Node; className?: string }) => (
  <div className={`flex items-center justify-between pb-[3px] ${className}`}>
    <span>{children}</span>
    <span className="flex gap-[12px] pr-[8px]">
      <svg viewBox="0 0 12 12" className="size-[11px]" fill="none" stroke="#85888a" strokeWidth="1.4"><path d="M6 1.500L10.500 6L6 10.500L1.500 6Z" /></svg>
      <svg viewBox="0 0 12 12" className="size-[11px]" fill="none" stroke="#85888a" strokeWidth="1.300"><path d="M1.500 1.500L10.500 10.500M10.500 1.500L1.500 10.500" /></svg>
    </span>
  </div>
);

const TaskHeader = () => <div className="h-[24px] rounded-t-[4px] border border-r-0 border-white bg-linear-to-r from-[#3daee9] to-[#a8d8f2]" />;

/* ---------- windows ---------- */
const SketcherWindow = () => (
  <div className="absolute left-0 top-0 h-[1031px] w-[1920px] overflow-hidden border-b border-[#303438] bg-[#eeeff1]">
    <MenuBar items={["File", "Edit", "View", "Tools", "Macro", "Sketch", "Windows", "Help"]} />
    <Ribbon active="Sketcher" enabled={["open", "save", "undo", "refresh"]}>
      <Group w="w-[123px]" label="Structure" pad="pl-[15px]" labelClass="-ml-[7px] w-[130px]">
        <Column cells={[{ n: "brick", off: true }, { n: "folder", off: true }, { n: "link", off: true }]} />
        <Column cells={[{ n: "links", off: true, menu: true }]} />
      </Group>
      <Group w="w-[216px]" label="Sketcher">
        <Column cells={[{ n: "newSketch", off: true }, { n: "leave", off: true }, { n: "exit" }]} />
        <Column cells={[{ n: "editSketch" }, { n: "mapView" }, { n: "mapSketch", off: true }]} />
        <Column cells={[{ n: "reorient", off: true }, { n: "validate", off: true }, { n: "merge", off: true }]} />
        <Column cells={[{ n: "mirrorSketch", off: true }, { n: "stop" }]} />
      </Group>
      <Group w="w-[414px]" label="Geometries">
        <div className="flex w-[110px] shrink-0 flex-col items-center gap-[7px] whitespace-nowrap pt-[9px] leading-[18px]">
          <Icon n="polyline" big />Create polyline
        </div>
        <Column cells={[{ n: "point" }, { n: "line" }, { n: "arc", menu: true }]} />
        <Column cells={[{ n: "circle", menu: true }, { n: "conic", menu: true }, { n: "bspline", menu: true }]} />
        <Column cells={[{ n: "rect", menu: true }, { n: "polygon", menu: true }, { n: "slot" }]} />
        <Column cells={[{ n: "fillet", menu: true }, { n: "trim" }, { n: "extend" }]} />
        <Column cells={[{ n: "split" }, { n: "extern" }, { n: "carbon" }]} />
        <Column cells={[{ n: "external6" }]} />
      </Group>
      <Group w="w-[436px]" label="Constraints">
        <div className="flex w-[132px] shrink-0 flex-col items-center gap-[7px] whitespace-nowrap pt-[9px] leading-[18px]">
          <Icon n="distance" big />Constrain distance
        </div>
        <Column cells={[{ n: "cV" }, { n: "cVl" }, { n: "cFix" }]} />
        <Column cells={[{ n: "cH" }, { n: "cHl" }, { n: "cTan" }]} />
        <Column cells={[{ n: "cPar" }, { n: "cPerp" }, { n: "cTangent" }]} />
        <Column cells={[{ n: "cEq" }, { n: "cSym" }, { n: "cBlock" }]} />
        <Column cells={[{ n: "lock" }, { n: "cDia", menu: true }, { n: "cAngle" }]} />
        <Column cells={[{ n: "toggleC", off: true }, { n: "swap" }, { n: "toggleAct", off: true }]} />
      </Group>
      <Group w="w-[260px]" label="Tools">
        <Column cells={[{ n: "dof" }, { n: "t6", off: true }, { n: "t10", off: true }]} />
        <Column cells={[{ n: "t2", off: true }, { n: "t7", off: true }, { n: "t11" }]} />
        <Column cells={[{ n: "t3" }, { n: "t8", off: true }, { n: "t12", off: true }]} />
        <Column cells={[{ n: "t4", off: true, menu: true }, { n: "t9", off: true }, { n: "t13", off: true }]} />
        <Column cells={[{ n: "t5" }]} />
      </Group>
      <Group w="w-[146px]" label="B-spline tools">
        <Column w="w-[53px]" cells={[{ n: "b1", menu: true }, { n: "b2", off: true }, { n: "b3", off: true }]} />
        <Column cells={[{ n: "b4", off: true }, { n: "b5", menu: true }, { n: "b6", off: true }]} />
      </Group>
      <Group w="w-[142px]" label="Virtual space">
        <Column cells={[null, { n: "virt" }]} />
      </Group>
    </Ribbon>
    <div className="flex h-[752px] pt-[2px]">
      <div className="w-[519px] shrink-0 pl-[2px] pr-[2px] pt-[1px]">
        <div className="h-[475px] rounded-[4px] border border-[#b9bdbd] bg-[#f3f5f4]">
          <DockTitle className="h-[28px] pl-[3px]">Combo View</DockTitle>
          <div className="flex h-[31px]">
            <span className="flex w-[81px] items-center justify-center rounded-tl-[3px] border-b border-r border-[#b9bdbd] bg-[#c5c7c9] pb-px">Model</span>
            <span className="w-[78px] border-r border-t-[3px] border-[#c0def4] border-r-[#b9bdbd]" />
            <span className="flex-1 border-b border-[#b9bdbd]" />
          </div>
          <div className="mx-px flex h-[413px] border border-t-0 border-[#b9bdbd] pl-[2px] pr-[3px] pt-[3px] pb-[3px]">
            <div className="flex-1 overflow-hidden rounded-[3px] border border-[#b9bdbd] bg-[linear-gradient(to_bottom,#f3f4f4_0px,#b6b7ba_125px,#9a9fa1_175px,#707377_300px)] pl-[8px]">
              <div className="mt-[62px]"><TaskHeader /></div>
              <div className="h-[110px] bg-[#eeeff1] pl-[11px]">
                <p className="h-[37px] pt-[12px] leading-[19px] text-black">Empty sketch</p>
                <label className="mt-[1px] flex h-[19px] items-center gap-[6px]"><i className="ml-[2px] size-[16px] shrink-0 rounded-[3px] border border-[#b3b6b8] bg-white" />Auto remove redundants</label>
                <label className="mt-[15px] flex h-[19px] items-center gap-[6px]"><i className="ml-[2px] size-[16px] shrink-0 rounded-[3px] border border-[#b3b6b8] bg-white" />Auto update</label>
              </div>
              <div className="mt-[9px]"><TaskHeader /></div>
              <div className="mt-[11px]"><TaskHeader /></div>
              <div className="h-[150px] bg-[#eeeff1] pl-[11px] pt-[12px]">
                <div className="flex h-[30px] items-center">Filter:<span className="ml-[8px] flex h-[30px] w-[320px] items-center rounded-[3px] border border-[#b3b6b8] bg-[#fcfcfc] pl-[5px]">All</span></div>
                <div className="ml-px mt-[9px] flex h-[32px] items-center rounded-l-[3px] border border-[#b3b6b8] bg-[#fcfcfc] pl-[6px]">Show List</div>
                <div className="ml-px mt-[8px] h-[60px] rounded-l-[2px] border border-[#b3b6b8] bg-white" />
              </div>
            </div>
          </div>
        </div>
        <div className="mt-[4px] h-[272px] rounded-[4px] border border-[#b9bdbd] bg-[#f3f5f4]">
          <DockTitle className="h-[29px] pl-[3px]">Report view</DockTitle>
          <div className="mx-[1px] h-[240px] rounded-[3px] border border-[#b9bdbd] bg-white" />
        </div>
      </div>
      <div className="flex flex-1 items-start justify-end bg-[#333366]">
        <svg viewBox="0 0 720 12" className="h-[12px] w-[720px]">
          <path d="M20 0V12" stroke="#3fae5a" strokeWidth="2.500" />
          <path d="M646.500 7L655 16H638Z" fill="#c0c3ea" /><circle cx="706.500" cy="12" r="6" fill="#b9bbe0" />
        </svg>
      </div>
    </div>
    <p className="pl-[2px] pt-[14px]">Preselected: Unnamed</p>
  </div>
);

const NavCube = () => (
  <svg viewBox="0 21 510 459" className="h-[153px] w-[170px]">
    <g fill="#c0c3ea" fillOpacity=".92">
      <path d="M291 43L325 77H257ZM291 438L325 402H257ZM93 240L129 206V273ZM488 240L453 206V273Z" />
      <path d="M236 62L240 84Q204 95 177 122L182 131L144 147L150 102L160 109Q192 76 236 62Z" />
      <path d="M346 62L342 84Q378 95 402 120L396 131L438 147L432 102L422 109Q392 76 346 62Z" />
      <circle cx="471" cy="60" r="18" />
    </g>
    <g fill="#e6e9ff" stroke="#222" strokeWidth="3.500" strokeLinejoin="round">
      <path d="M270 134L380 156L397 182L381 280L333 354L306 360L197 310L180 207L192 180Z" />
      <path d="M270 134L380 156L321 213L192 180ZM180 207L310 248L343 246L397 182M192 180L321 213L310 248M321 213L343 246L333 354M310 248L306 360M380 156L396 180" fill="none" />
    </g>
    <path d="M192 178L178 190V208L190 212Z" fill="#b4b9ee" />
    <path d="M321 215L340 244L312 246Z" fill="#b4b9ee" />
    <g fill="none" strokeWidth="5">
      <path d="M154 224L178 322" stroke="#0000ff" /><path d="M178 325L281 375" stroke="#ff0000" />
      <path d="M180 322L200 303" stroke="#00ff00" /><path d="M200 303L248 260" stroke="#c9f7d4" />
    </g>
    <text transform="matrix(.96 .27 .06 1 206 283)" fontFamily="Liberation Sans, sans-serif" fontWeight="700" fontSize="31" fill="#222" textLength="82" lengthAdjust="spacingAndGlyphs">FRONT</text>
    <text transform="matrix(-.95 -.16 .5 -.5 316 157)" fontFamily="Liberation Sans, sans-serif" fontWeight="700" fontSize="20" fill="#333">TOP</text>
    <text transform="matrix(.35 -.9 .1 1 352 292)" fontFamily="Liberation Sans, sans-serif" fontWeight="700" fontSize="22" fill="#333" textLength="44" lengthAdjust="spacingAndGlyphs">RIGHT</text>
    <path d="M360 374L392 363L420 372V414L390 422L360 412Z" fill="#b4b6da" />
    <path d="M360 374L392 363L420 372L390 381Z" fill="#c8caf0" /><path d="M390 381L420 372V414L390 422Z" fill="#a0a2cc" />
    <path d="M431 384H468L449 402Z" fill="#5e5e7c" />
  </svg>
);

const AxisCross = () => (
  <svg viewBox="0 0 150 140" className="h-[47px] w-[50px]">
    <g fill="none" strokeWidth="4.500"><path d="M42 105V60" stroke="#32328c" /><path d="M42 105L60 88" stroke="#288c28" /><path d="M42 105L90 122" stroke="#962828" /></g>
    <path d="M42 33L50 62H34Z" fill="#20208c" /><path d="M73 75L70 90L58 80Z" fill="#1e821e" stroke="#1e821e" strokeWidth="3" /><path d="M115 128L84 126L89 112Z" fill="#8c1e1e" />
    <g fontFamily="DejaVu Sans, sans-serif" fontSize="25" fill="#111" stroke="#111" strokeWidth=".8"><text x="44" y="29">Z</text><text x="74" y="71">Y</text><text x="116" y="125">X</text></g>
  </svg>
);

const DocTab = ({ label, active }: { label: string; active?: boolean }) => (
  <span className={`flex h-[29px] items-center gap-[8px] whitespace-nowrap pl-[8px] ${active ? "w-[141px] border-b-[2.500px] border-r border-[#c0def4] border-r-[#b9bdbd] bg-[#eff0f1]" : "w-[129px] rounded-bl-[3px] border-r border-[#b9bdbd] bg-[#c5c7c9] pb-[2px]"}`}>
    <svg viewBox="0 0 64 64" className="size-[16px] shrink-0">{ICONS.logo}</svg>
    {label}
    <svg viewBox="0 0 12 12" className="ml-auto mr-[11px] size-[10px] shrink-0" fill="none" stroke="#8e9193" strokeWidth="1.300"><path d="M1.500 1.500L10.500 10.500M10.500 1.500L1.500 10.500" /></svg>
  </span>
);

const PartWindow = () => (
  <div className="absolute left-[90px] top-[249px] h-[1032px] w-[1920px] overflow-hidden bg-[#eeeff1]">
    <MenuBar items={["File", "Edit", "View", "Tools", "Macro", "Part", "Measure", "Windows", "Help"]} />
    <Ribbon active="Part" enabled={["new", "open", "save"]}>
      <Group w="w-[123px]" label="Structure" pad="pl-[15px]" labelClass="-ml-[7px] w-[130px]">
        <Column cells={[{ n: "brick" }, { n: "folder" }, { n: "link" }]} />
        <Column cells={[{ n: "links", menu: true }]} />
      </Group>
      <Group w="w-[430px]" label="Solids" pad="pl-[30px]">
        <Column w="w-[106px]" cells={[{ n: "cube", label: "Cube" }, { n: "cylinder", label: "Cylinder" }, { n: "sphere", label: "Sphere" }]} />
        <Column w="w-[126px]" cells={[{ n: "cone", label: "Cone" }, { n: "torus", label: "Torus" }, { n: "tube", label: "Create tube" }]} />
        <Column w="w-[150px]" cells={[{ n: "primitives", label: "Create primitives" }, { n: "builder", label: "Shape builder" }]} />
      </Group>
      <Group w="w-[885px]" label="Tools" pad="pl-[30px]">
        <Column w="w-[114px]" cells={[{ n: "extrude", label: "Extrude" }, { n: "revolve", label: "Revolve" }, { n: "mirroring", label: "Mirroring" }]} />
        <Column w="w-[184px]" cells={[{ n: "pfillet", label: "Fillet" }, { n: "chamfer", label: "Chamfer" }, { n: "face", off: true, label: "Make face from wires" }]} />
        <Column w="w-[178px]" cells={[{ n: "ruled", label: "Create ruled surface" }, { n: "loft", label: "Loft" }, { n: "sweep", label: "Sweep" }]} />
        <Column w="w-[142px]" cells={[{ n: "section", off: true, label: "Section" }, { n: "cross", off: true, label: "Cross-sections" }, { n: "offset", off: true, label: "Offset:", menu: true, shift: true }]} />
        <Column w="w-[210px]" cells={[{ n: "thickness", off: true, label: "Thickness" }, { n: "projection", label: "Create projection on surface" }, { n: "colorface", off: true, label: "Color per face" }]} />
      </Group>
      <Group w="w-[434px]" label="Boolean" launcher={false} pad="pl-[30px]" labelClass="w-[480px]">
        <Column w="w-[176px]" cells={[{ n: "compound", label: "Compound tools", menu: true, shift: true }, { n: "boolean", label: "Boolean" }, { n: "cut", off: true, label: "Cut" }]} />
        <Column w="w-[144px]" cells={[{ n: "union", off: true, label: "Union" }, { n: "intersection", off: true, label: "Intersection" }, { n: "join", label: "Join objects", menu: true, shift: true }]} />
        <Column w="w-[150px]" cells={[{ n: "splitObj", label: "Split objects", shift: true }, { n: "check", off: true, label: "Check Geometry" }, { n: "defeat", off: true, label: "Defeaturing" }]} />
      </Group>
      <svg viewBox="0 0 8 14" className="ml-[14px] mt-[59px] h-[13px] w-[8px]" fill="none" stroke="#31363b" strokeWidth="1.200"><path d="M1 1L7 7L1 13" /></svg>
    </Ribbon>
    <div className="flex h-[755px] pt-[2px]">
      <div className="w-[519px] shrink-0 pl-[1px] pr-[2px] pt-[1px]">
        <div className="h-[475px] rounded-[4px] border border-[#b9bdbd] bg-[#f3f5f4]">
          <DockTitle className="h-[28px] pl-[4px]">Combo View</DockTitle>
          <div className="flex h-[31px] pl-[2px]">
            <span className="flex w-[80px] items-center justify-center rounded-tl-[3px] border-b border-r border-[#b9bdbd] bg-[#c5c7c9] pb-[2px]">Model</span>
            <span className="flex w-[79px] items-center justify-center border-r border-t-[3px] border-[#c0def4] border-r-[#b9bdbd] pb-[4px]">Tasks</span>
            <span className="mr-[2px] flex-1 rounded-tr-[3px] border-b border-[#b9bdbd]" />
          </div>
          <div className="mx-[2px] flex h-[413px] rounded-b-[3px] border border-t-0 border-[#b9bdbd] px-[2px] pb-[3px] pt-[3px]">
            <div className="flex-1 rounded-[3px] border border-[#b9bdbd] bg-[linear-gradient(to_bottom,#fafbfa_0px,#b6b7ba_59px,#8f9394_92px,#707377_121px)]" />
          </div>
        </div>
        <div className="mt-[2px] h-[274px] rounded-[4px] border border-[#b9bdbd] bg-[#f3f5f4]">
          <DockTitle className="h-[29px] pl-[4px]">Report view</DockTitle>
          <div className="mx-[1px] h-[242px] rounded-[3px] border border-[#3daee9] bg-white" />
        </div>
      </div>
      <div className="flex min-w-0 flex-1 flex-col">
        <div className="flex h-[724px] flex-col items-end justify-between bg-linear-to-b from-[#333366] to-[#9797a9]">
          <NavCube />
          <div className="pb-[24px]"><AxisCross /></div>
        </div>
        <div className="flex flex-1 border-t border-[#b9bdbd]">
          <DocTab label="Start page" />
          <DocTab label="Unnamed : 1" active />
        </div>
      </div>
    </div>
    <footer className="flex h-[40px] items-center justify-end whitespace-nowrap pt-px">
      <svg viewBox="0 0 48 48" className="size-[16px]" fill="none" stroke="#5d6164" strokeWidth="6"><path d="M8 14Q20 0 36 8M40 34Q30 48 14 40" /><g fill="#2c3135" stroke="none"><circle cx="37" cy="11" r="9" /><circle cx="10" cy="38" r="9" /></g></svg>
      <span className="ml-[4px]">Gesture</span>
      <Chevron className="ml-[18px] mr-[13px] h-[7px] w-[11px]" />
      <span className="pr-[2px]">193,51 mm x 100,00 mm</span>
    </footer>
    <div className="flex h-px">
      <i className="w-[103px] bg-[#303438]" />
      {["w-[144px]", "w-[144px]", "w-[144px]", "w-[144px]", "w-[144px]", "w-[144px]"].map((w, i) => <i key={i} className={`mr-px bg-[#75787a] ${w}`} />)}
      <i className="w-[144px] bg-[#3f9fd4]" />
      <i className="w-[434px] bg-[#75787a]" />
      <i className="flex-1 bg-[#303438]" />
    </div>
  </div>
);

export default function App() {
  return (
    <main className="relative h-[1281px] w-[2010px] overflow-hidden bg-white text-[13px] leading-[20px] text-[#31363b] [font-family:'Noto_Sans',sans-serif]">
      <svg className="absolute size-0" aria-hidden>
        <defs>
          <radialGradient id="gR" cx=".35" cy=".3" r=".8"><stop offset="0" stopColor="#f02c2c" /><stop offset="1" stopColor="#a80000" /></radialGradient>
          <linearGradient id="gRed" x1="0" y1="0" x2="1" y2="1"><stop offset="0" stopColor="#cc0000" /><stop offset=".5" stopColor="#e01010" /><stop offset="1" stopColor="#cc0000" /></linearGradient>
          <linearGradient id="gB" x1="0" y1="0" x2="1" y2="1"><stop offset="0" stopColor="#729fcf" /><stop offset="1" stopColor="#2a5a9c" /></linearGradient>
          <radialGradient id="gBs"><stop offset="0" stopColor="#2f62a6" /><stop offset="1" stopColor="#204a87" /></radialGradient>
          <linearGradient id="gY" x1="0" y1="0" x2="1" y2="1"><stop offset="0" stopColor="#fce94f" /><stop offset="1" stopColor="#edd400" /></linearGradient>
          <linearGradient id="gYh"><stop offset="0" stopColor="#e0c400" /><stop offset=".3" stopColor="#fce94f" /><stop offset="1" stopColor="#c4a000" /></linearGradient>
          <radialGradient id="gYs" cx=".3" cy=".3" r=".8"><stop offset="0" stopColor="#fce94f" /><stop offset="1" stopColor="#c4a000" /></radialGradient>
        </defs>
      </svg>
      <SketcherWindow />
      <PartWindow />
    </main>
  );
}
